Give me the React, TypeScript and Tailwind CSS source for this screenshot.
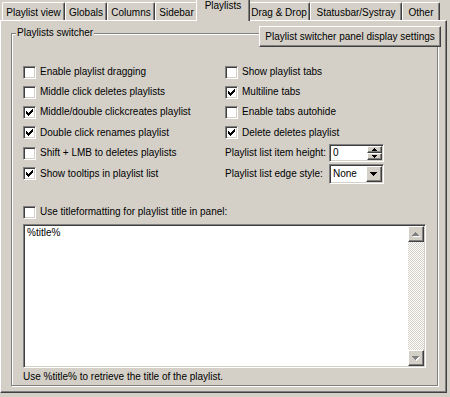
import type { ReactNode } from 'react';

const tabs = [
  { label: 'Playlist view', w: 'w-[63px]' },
  { label: 'Globals', w: 'w-[42px]' },
  { label: 'Columns', w: 'w-[48px]' },
  { label: 'Sidebar', w: 'w-[43px]' },
  { label: 'Playlists', w: 'w-[48px]', active: true },
  { label: 'Drag & Drop', w: 'w-[62px]' },
  { label: 'Statusbar/Systray', w: 'w-[92px]' },
  { label: 'Other', w: 'w-[38px]' },
];

const leftOptions = [
  { label: 'Enable playlist dragging', checked: false, h: 'h-[20px]' },
  { label: 'Middle click deletes playlists', checked: false, h: 'h-[20px]' },
  { label: 'Middle/double clickcreates playlist', checked: true, h: 'h-[20px]' },
  { label: 'Double click renames playlist', checked: true, h: 'h-[21px]' },
  { label: 'Shift + LMB to deletes playlists', checked: false, h: 'h-[20px]' },
  { label: 'Show tooltips in playlist list', checked: true, h: 'h-[21px]' },
];

const rightOptions = [
  { label: 'Show playlist tabs', checked: false, h: 'h-[20px]' },
  { label: 'Multiline tabs', checked: true, h: 'h-[20px]' },
  { label: 'Enable tabs autohide', checked: false, h: 'h-[20px]' },
  { label: 'Delete deletes playlist', checked: true, h: 'h-[21px]' },
];

function CheckBox({ checked }: { checked?: boolean }) {
  return (
    <span className="relative block h-[13px] w-[13px] shrink-0 border border-t-[#808080] border-l-[#808080] border-b-white border-r-white bg-white shadow-[inset_1px_1px_0_#404040,inset_-1px_-1px_0_#d4d0c8]">
      {checked && (
        <svg
          className="absolute left-[2px] top-[2px]"
          width="7"
          height="7"
          viewBox="0 0 7 7"
          shapeRendering="crispEdges"
        >
          <path
            d="M0 2h1v3H0zM1 3h1v3H1zM2 4h1v3H2zM3 3h1v3H3zM4 2h1v3H4zM5 1h1v3H5zM6 0h1v3H6z"
            fill="#000"
          />
        </svg>
      )}
    </span>
  );
}

function Option({ label, checked, h = 'h-[20px]' }: { label: string; checked?: boolean; h?: string }) {
  return (
    <div className={`flex ${h} items-center gap-[4px]`}>
      <CheckBox checked={checked} />
      <span className="whitespace-nowrap">{label}</span>
    </div>
  );
}

function Raised({ className, children }: { className?: string; children?: ReactNode }) {
  return (
    <div
      className={`flex items-center justify-center border border-t-white border-l-white border-r-[#404040] border-b-[#404040] bg-[#d4d0c8] shadow-[inset_-1px_-1px_0_#808080] ${className ?? ''}`}
    >
      {children}
    </div>
  );
}

function Sunken({ className, children }: { className?: string; children?: ReactNode }) {
  return (
    <div
      className={`border border-t-[#808080] border-l-[#808080] border-b-white border-r-white bg-white shadow-[inset_1px_1px_0_#404040,inset_-1px_-1px_0_#d4d0c8] ${className ?? ''}`}
    >
      {children}
    </div>
  );
}

function Arrow({ dir, w = 7, disabled }: { dir: 'up' | 'down'; w?: number; disabled?: boolean }) {
  const h = Math.ceil(w / 2);
  const d =
    dir === 'up'
      ? `M${w / 2} 0L${w} ${h}H0z`
      : `M0 0H${w}L${w / 2} ${h}z`;
  return (
    <svg width={w + 1} height={h + 1} viewBox={`0 0 ${w + 1} ${h + 1}`} shapeRendering="crispEdges">
      {disabled && <path d={d} fill="#fff" transform="translate(1 1)" />}
      <path d={d} fill={disabled ? '#808080' : '#000'} />
    </svg>
  );
}

export default function App() {
  return (
    <div className="h-[397px] w-[450px] overflow-hidden bg-[#d4d0c8] font-['Liberation_Sans',Arial,sans-serif] text-[10px] leading-[12px] text-black">
      {/* Tab strip */}
      <div className="flex h-[20px] items-end pl-[2px]">
        {tabs.map(t =>
          t.active ? (
            <div
              key={t.label}
              className={`relative z-10 -mx-[2px] -mb-[1px] flex h-[21px] ${t.w} box-content items-start justify-center rounded-t-[2px] border-l border-t border-r border-t-white border-l-white border-r-[#404040] bg-[#d4d0c8] px-[2px] pt-[3px] shadow-[inset_-1px_0_0_#808080]`}
            >
              {t.label}
            </div>
          ) : (
            <div
              key={t.label}
              className={`flex h-[18px] ${t.w} items-start justify-center rounded-t-[2px] border-l border-t border-r border-t-white border-l-white border-r-[#404040] pt-[4px] shadow-[inset_-1px_0_0_#808080]`}
            >
              {t.label}
            </div>
          ),
        )}
      </div>

      {/* Tab panel */}
      <div className="h-[373px] w-[447px] border border-t-white border-l-white border-r-[#404040] border-b-[#404040] pl-[10px] pt-[12px] shadow-[inset_-1px_-1px_0_#808080]">
        {/* Group box */}
        <div className="relative flex h-[353px] w-[427px] flex-col border border-[#808080] px-[11px] shadow-[inset_1px_1px_0_#fff,1px_1px_0_#fff]">
          <span className="absolute left-[4px] top-[-7px] bg-[#d4d0c8] px-[1px]">Playlists switcher</span>

          <div className="-mr-[15px] -mt-[8px] flex justify-end">
            <Raised className="h-[21px] w-[182px]">Playlist switcher panel display settings</Raised>
          </div>

          <div className="mt-[15px] flex">
            <div className="flex w-[202px] flex-col">
              {leftOptions.map(o => (
                <Option key={o.label} label={o.label} checked={o.checked} h={o.h} />
              ))}
            </div>
            <div className="flex flex-col">
              {rightOptions.map(o => (
                <Option key={o.label} label={o.label} checked={o.checked} h={o.h} />
              ))}
              <div className="flex h-[20px] items-center">
                <span className="w-[104px] whitespace-nowrap">Playlist list item height:</span>
                <Sunken className="flex h-[18px] w-[55px] items-center">
                  <span className="flex-1 pl-[3px]">0</span>
                  <div className="flex h-full flex-col py-[1px] pr-[1px]">
                    <Raised className="h-[7px] w-[15px]">
                      <Arrow dir="up" w={5} />
                    </Raised>
                    <Raised className="h-[7px] w-[15px]">
                      <Arrow dir="down" w={5} />
                    </Raised>
                  </div>
                </Sunken>
              </div>
              <div className="flex h-[22px] items-center">
                <span className="w-[104px] whitespace-nowrap">Playlist list edge style:</span>
                <Sunken className="flex h-[20px] w-[55px] items-center">
                  <span className="flex-1 pl-[3px]">None</span>
                  <div className="p-[1px]">
                    <Raised className="h-[16px] w-[16px]">
                      <Arrow dir="down" />
                    </Raised>
                  </div>
                </Sunken>
              </div>
            </div>
          </div>

          <div className="mt-[17px]">
            <Option label="Use titleformatting for playlist title in panel:" />
          </div>

          <Sunken className="mt-[2px] flex h-[144px] w-[403px]">
            <div className="flex-1 px-[3px] pt-[2px]">%title%</div>
            <div className="flex flex-col py-[1px] pr-[1px]">
              <Raised className="h-[16px] w-[16px]">
                <Arrow dir="up" disabled />
              </Raised>
              <div className="flex-1 bg-[repeating-conic-gradient(#fff_0_25%,#d4d0c8_0_50%)] bg-[length:2px_2px]" />
              <Raised className="h-[16px] w-[16px]">
                <Arrow dir="down" disabled />
              </Raised>
            </div>
          </Sunken>

          <div className="flex h-[17px] items-center">Use %title% to retrieve the title of the playlist.</div>
        </div>
      </div>
    </div>
  );
}
